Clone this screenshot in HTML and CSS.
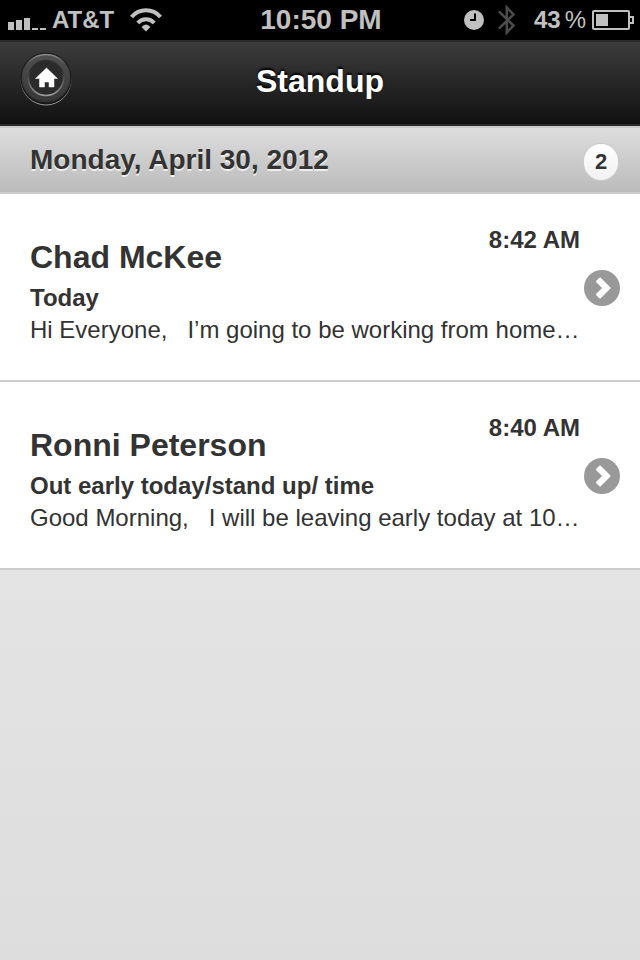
FILE: index.html
```html
<!DOCTYPE html>
<html lang="en">
<head>
<meta charset="utf-8">
<meta name="viewport" content="width=device-width, initial-scale=1">
<title>Standup</title>
<link rel="stylesheet" href="styles.css">
</head>
<body>
<div class="status">
  <div class="status-left">
    <svg class="signal" width="38" height="18" viewBox="0 0 38 18" fill="currentColor" aria-hidden="true">
      <path d="M0 10h6v8H0zM8 8h6v10H8zM16 6h6v12h-6zM24 16h6v2h-6zM32 16h6v2h-6z"/>
    </svg>
    <span class="carrier">AT&amp;T</span>
    <svg width="32" height="24" viewBox="0 0 32 24" fill="none" stroke="currentColor" stroke-width="4" aria-hidden="true">
      <path d="M1.500 9A19 19 0 0 1 30.500 9"/>
      <path d="M7.800 15A11 11 0 0 1 24.200 15"/>
      <path d="M16 23.500L11.500 19Q16 14 20.500 19Z" fill="currentColor" stroke="none"/>
    </svg>
  </div>
  <span class="clock">10:50 PM</span>
  <div class="status-right">
    <svg class="alarm" width="20" height="20" viewBox="0 0 20 20" aria-hidden="true">
      <circle cx="10" cy="10" r="10" fill="currentColor"/>
      <path d="M11 3.500V10H6" fill="none" stroke="#000" stroke-width="2"/>
    </svg>
    <svg class="bluetooth" width="18" height="32" viewBox="0 0 18 32" fill="none" stroke="#4c4c4c" stroke-width="2.500" aria-hidden="true">
      <path d="M1 7.500L15.500 21.500L8.800 28.500V3.500L15.500 10.500L1 24.500"/>
    </svg>
    <span class="percent">43<span class="percent-sign">%</span></span>
    <svg class="battery" width="42" height="20" viewBox="0 0 42 20" fill="none" stroke="currentColor" stroke-width="2" aria-hidden="true">
      <rect x="1" y="1" width="36" height="18" rx="1"/>
      <path d="M38 7h3v6h-3"/>
      <path d="M4 4h12v12H4z" fill="currentColor" stroke="none"/>
    </svg>
  </div>
</div>

<header class="bar">
  <button class="home" type="button" aria-label="Home">
    <svg width="52" height="54" viewBox="0 0 52 54" aria-hidden="true">
      <defs>
        <linearGradient id="rim" x1="0" y1="0" x2="0" y2="1">
          <stop offset="0" stop-color="#8c8c8c"/><stop offset=".2" stop-color="#4c4c4c"/><stop offset="1" stop-color="#303030"/>
        </linearGradient>
        <linearGradient id="ring" x1="0" y1="0" x2="0" y2="1">
          <stop offset="0" stop-color="#505050"/><stop offset="1" stop-color="#383838"/>
        </linearGradient>
        <linearGradient id="lip" x1="0" y1="0" x2="0" y2="1">
          <stop offset=".3" stop-color="#303030"/><stop offset="1" stop-color="#9a9a9a"/>
        </linearGradient>
      </defs>
      <circle cx="26" cy="28" r="25" fill="#161616" stroke="url(#lip)"/>
      <circle cx="26" cy="26" r="25.500" fill="#1c1c1c"/>
      <circle cx="26" cy="26" r="23.500" fill="url(#ring)" stroke="url(#rim)" stroke-width="1.500"/>
      <circle cx="26" cy="26" r="17.500" fill="#2b2b2b" stroke="url(#lip)" stroke-width="1.500"/>
      <path d="M26.500 16L37.500 26.500H34V35H29V30H24.500V35H19.500V26.500H15.500Z" fill="#fff" stroke="#fff" stroke-width=".5" stroke-linejoin="round"/>
    </svg>
  </button>
  <h1 class="title">Standup</h1>
</header>

<main>
  <div class="divider">
    <h2 class="date">Monday, April 30, 2012</h2>
    <span class="count">2</span>
  </div>
  <ul class="list">
    <li>
      <a class="row" href="#chad">
        <div class="message">
          <div class="message-head">
            <h3 class="name">Chad McKee</h3>
            <time class="time">8:42 AM</time>
          </div>
          <p class="subject">Today</p>
          <p class="preview">Hi Everyone, &nbsp; I’m going to be working from home…</p>
        </div>
        <svg class="arrow" width="36" height="36" viewBox="0 0 36 36" aria-hidden="true">
          <circle cx="18" cy="18" r="18" fill="#999"/>
          <path d="M16 8.500L25.500 18L16 27.500L13 24.500L19.500 18L13 11.500Z" fill="#fff" stroke="#fff" stroke-width="2" stroke-linejoin="round"/>
        </svg>
      </a>
    </li>
    <li>
      <a class="row" href="#ronni">
        <div class="message">
          <div class="message-head">
            <h3 class="name">Ronni Peterson</h3>
            <time class="time">8:40 AM</time>
          </div>
          <p class="subject">Out early today/stand up/ time</p>
          <p class="preview">Good Morning, &nbsp; I will be leaving early today at 10…</p>
        </div>
        <svg class="arrow" width="36" height="36" viewBox="0 0 36 36" aria-hidden="true">
          <circle cx="18" cy="18" r="18" fill="#999"/>
          <path d="M16 8.500L25.500 18L16 27.500L13 24.500L19.500 18L13 11.500Z" fill="#fff" stroke="#fff" stroke-width="2" stroke-linejoin="round"/>
        </svg>
      </a>
    </li>
  </ul>
</main>
</body>
</html>
```
FILE: styles.css
```css
* {
  box-sizing: border-box;
}

body,
h1,
h2,
h3,
p,
ul {
  margin: 0;
  padding: 0;
}

body {
  min-height: 100vh;
  background: linear-gradient(#eee, #ddd);
  color: #333;
  font-family: "Liberation Sans", Arial, sans-serif;
  font-size: 24px;
  line-height: 32px;
}

svg {
  display: block;
  flex: none;
}

/* Status bar */
.status {
  display: grid;
  grid-template-columns: 1fr auto 1fr;
  align-items: center;
  padding: 0 6px 0 8px;
  height: 40px;
  background: #000;
  color: #c0c0c0;
  font-weight: bold;
}

.status-left,
.status-right {
  display: flex;
  align-items: center;
}

.status-left {
  gap: 6px;
}

.signal {
  margin-top: 2px;
}

.carrier {
  margin-right: 10px;
}

.clock {
  font-size: 28px;
}

.status-right {
  justify-content: flex-end;
}

.bluetooth {
  margin: 0 18px 0 14px;
}

.percent-sign {
  margin-left: 4px;
  font-weight: normal;
}

.battery {
  margin-left: 6px;
}

/* Title bar */
.bar {
  display: grid;
  grid-template-columns: 52px 1fr 52px;
  align-items: center;
  padding: 10px 20px 18px;
  border-top: 2px solid #2a2a2a;
  border-bottom: 2px solid #2a2a2a;
  background: linear-gradient(#3c3c3c, #111);
}

.home {
  padding: 0;
  border: 0;
  background: none;
  cursor: pointer;
}

.title {
  padding-top: 4px;
  color: #fff;
  font-size: 32px;
  line-height: 40px;
  text-align: center;
  text-shadow: 0 -2px 2px #000;
}

/* Date divider */
.divider {
  display: flex;
  align-items: flex-start;
  justify-content: space-between;
  padding: 16px 22px 12px 30px;
  border-top: 2px solid #ccc;
  border-bottom: 2px solid #ccc;
  background: linear-gradient(#ddd, #bbb);
}

.date {
  font-size: 28px;
  line-height: 32px;
  text-shadow: 0 2px 0 #eee;
}

.count {
  min-width: 34px;
  border-radius: 18px;
  background: linear-gradient(#fff, #f1f1f1);
  box-shadow: 0 0 0 1px #ccc;
  font-size: 22px;
  font-weight: bold;
  line-height: 36px;
  text-align: center;
}

/* Messages */
.list {
  list-style: none;
}

.row {
  display: flex;
  align-items: center;
  gap: 4px;
  padding: 30px 20px 34px 30px;
  border-bottom: 2px solid #ccc;
  background: #fff;
  color: inherit;
  text-decoration: none;
}

.message {
  flex: 1;
  min-width: 0;
}

.message-head {
  display: flex;
  align-items: flex-start;
  justify-content: space-between;
  margin-bottom: 5px;
}

.name {
  padding-top: 13px;
  font-size: 32px;
  line-height: 40px;
}

.time,
.subject {
  font-weight: bold;
}

.preview {
  overflow: hidden;
  text-overflow: ellipsis;
  white-space: nowrap;
}

.arrow {
  margin-top: 6px;
}
```
